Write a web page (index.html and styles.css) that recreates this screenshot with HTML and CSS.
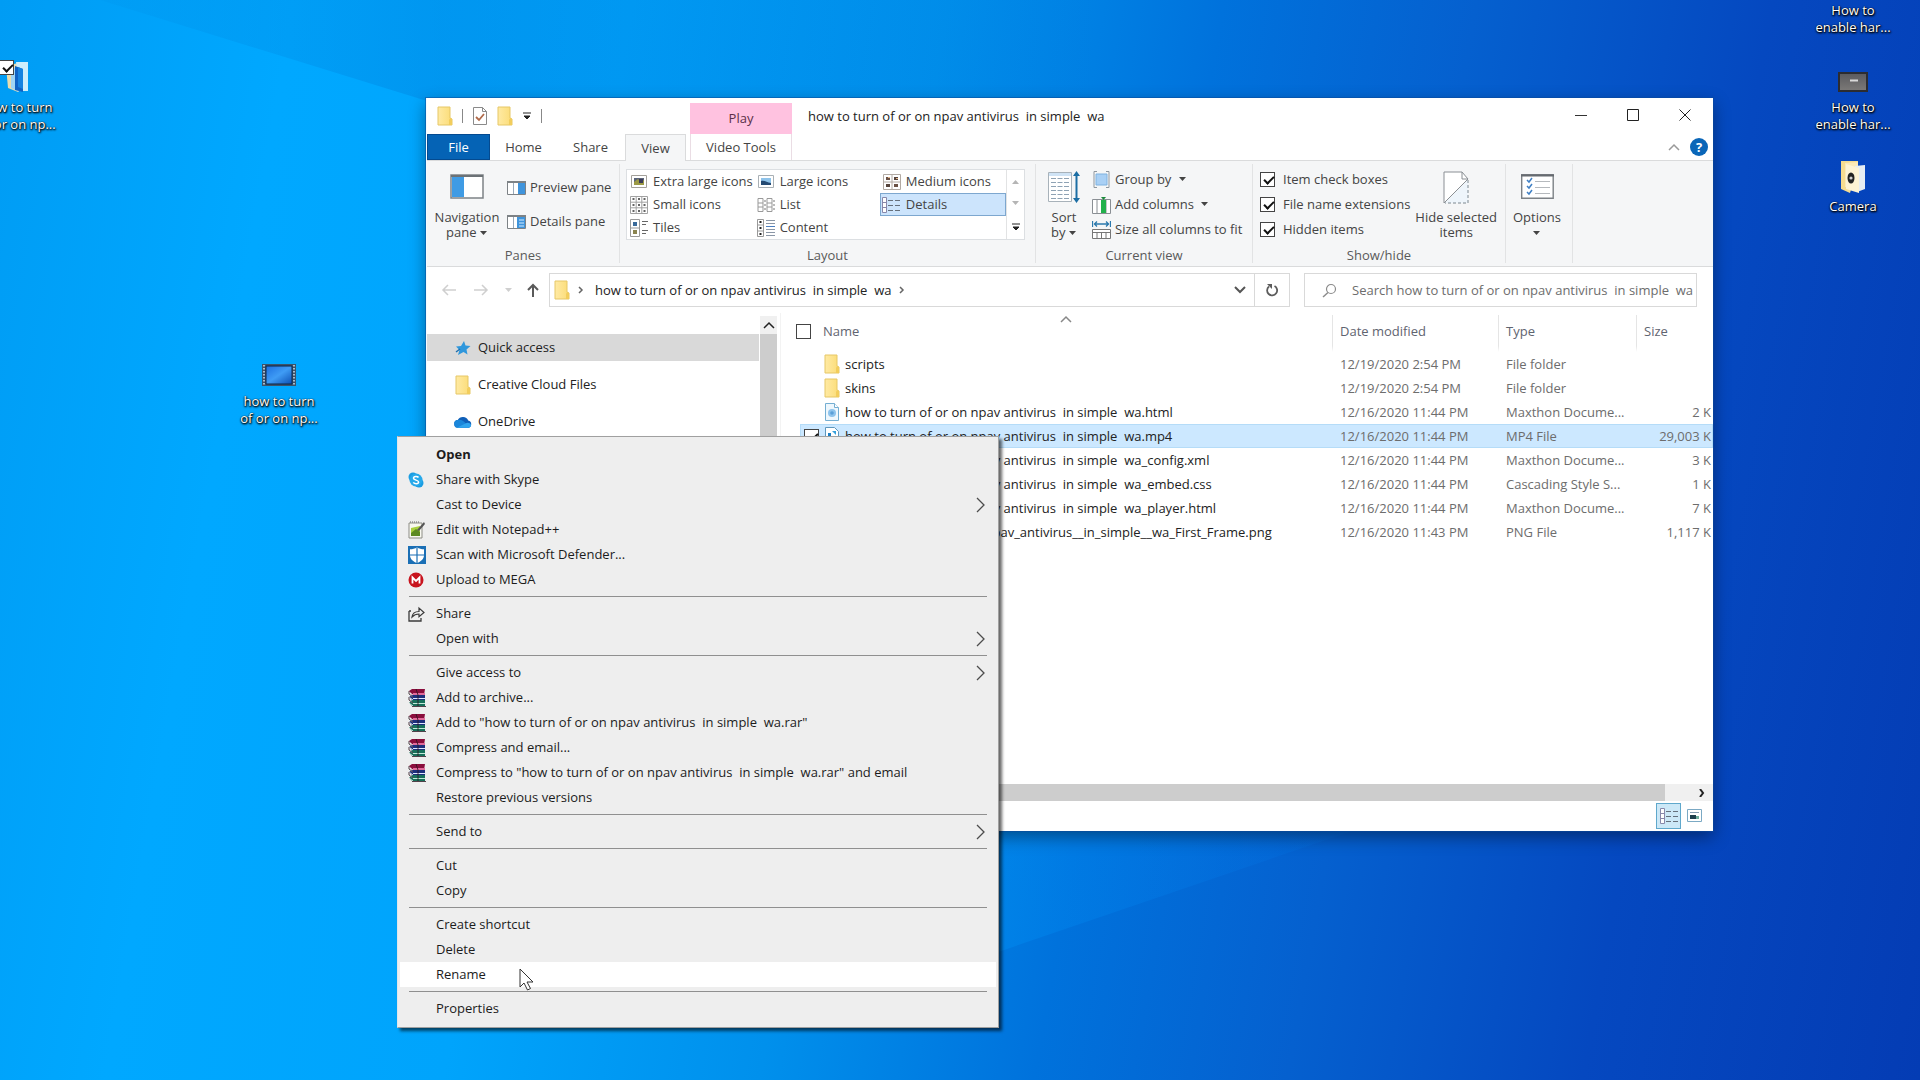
FILE: index.html
```html
<!DOCTYPE html>
<html lang="en">
<head>
<meta charset="utf-8">
<title>how to turn of or on npav antivirus  in simple  wa</title>
<link rel="stylesheet" href="styles.css">
</head>
<body>
<svg class="defs" aria-hidden="true">
  <defs>
    <linearGradient id="folder-fill" x1="0" y1="0" x2="1" y2="0"><stop offset="0" stop-color="#ffeaa4"/><stop offset="1" stop-color="#fbdc76"/></linearGradient>
    <linearGradient id="screen-fill" x1="0" y1="0" x2="1" y2="1"><stop offset="0" stop-color="#1c6fe0"/><stop offset=".5" stop-color="#3f9cf5"/><stop offset="1" stop-color="#0b4fb4"/></linearGradient>
    <linearGradient id="metal-fill" x1="0" y1="0" x2="0" y2="1"><stop offset="0" stop-color="#5a5a5e"/><stop offset="1" stop-color="#7c7a78"/></linearGradient>
    <symbol id="i-folder" viewBox="0 0 16 20"><path d="M1 1h12v11l2 1v6H1z" fill="url(#folder-fill)" stroke="#e6c766"/><path d="M13 12l2 1v6h-3v-5z" fill="#f2cd5c"/></symbol>
    <symbol id="i-props" viewBox="0 0 16 20"><path d="M1.500 1.500h9l4 4v13h-13z" fill="#fff" stroke="#8a8a8a"/><path d="M10.500 1.500v4h4" fill="none" stroke="#8a8a8a"/><path d="M4 11l3 3 5-6" fill="none" stroke="#b06a4a" stroke-width="1.800"/></symbol>
    <symbol id="i-more" viewBox="0 0 10 8"><path d="M1 1h8M2 4h6L5 7z" stroke="#222" fill="#222"/></symbol>
    <symbol id="i-down" viewBox="0 0 8 5"><path d="M0 0h7L3.500 4z" fill="currentColor"/></symbol>
    <symbol id="i-up" viewBox="0 0 8 5"><path d="M0 5h7L3.500 1z" fill="currentColor"/></symbol>
    <symbol id="i-navpane" viewBox="0 0 34 25"><path d="M1 1h32v23H1z" fill="#fff" stroke="#7d8286" stroke-width="1.500"/><path d="M2 3h12v20H2z" fill="#3f9be4"/><path d="M1 2h32" stroke="#6c7276" stroke-width="2"/></symbol>
    <symbol id="i-preview" viewBox="0 0 19 14"><path d="M.5.5h18v13H.5z" fill="#fff" stroke="#7d8286"/><path d="M0 1h19" stroke="#7d8286" stroke-width="2"/><path d="M11 2h7v11h-7z" fill="#3f94dc"/><path d="M6.500 2v11" stroke="#9ab"/></symbol>
    <symbol id="i-detailspane" viewBox="0 0 19 14"><path d="M.5.5h18v13H.5z" fill="#fff" stroke="#7d8286"/><path d="M0 1h19" stroke="#7d8286" stroke-width="2"/><path d="M10 2h8v11h-8z" fill="#3f94dc"/><path d="M12 5h5M12 8h5M12 11h5" stroke="#d5ecff"/><path d="M6.500 2v11" stroke="#9ab"/></symbol>
    <symbol id="i-xl" viewBox="0 0 18 18"><path d="M1.500 2.500h15v12h-15z" fill="#fff" stroke="#a3a09a"/><path d="M4 5h10v7H4z" fill="#5b6478"/><path d="M4 9l4-3 3 3 3-2v5H4z" fill="#9c9a45"/><path d="M9 6h4v4H9z" fill="#3b3a58"/></symbol>
    <symbol id="i-large" viewBox="0 0 18 18"><path d="M1.500 2.500h15v12h-15z" fill="#fff" stroke="#a9b0b5"/><path d="M4 5h10v7H4z" fill="#8ec3ea"/><path d="M4 8c4-1 6 2 10 2v2H4z" fill="#244a73"/></symbol>
    <symbol id="i-medium" viewBox="0 0 18 18"><path d="M.5 1.500h17v15H.5zM9 2v14M1 9h16" fill="#fff" stroke="#b2aaa3"/><path d="M3 4h4v3H3zM11 11h4v3h-4z" fill="#6a5145"/><path d="M11 4h4v3h-4zM3 11h4v3H3z" fill="#56443c"/><path d="M5 4h2v1H5zM13 5h2v1h-2z" fill="#e8b98d"/></symbol>
    <symbol id="i-small" viewBox="0 0 18 18"><path d="M.5.5h17v17H.5zM6.200 0v18M11.800 0v18M0 6.200h18M0 11.800h18" fill="#fff" stroke="#a2a2a2"/><path d="M2.500 3h2M8 3h2M13.500 3h2M2.500 9h2M8 9h2M13.500 9h2M2.500 15h2M8 15h2M13.500 15h2" stroke="#333" stroke-width="1.600"/></symbol>
    <symbol id="i-list" viewBox="0 0 18 18"><path d="M1 2.500h5v13H1zM10 2.500h5v13h-5zM1 7h5M1 11h5M10 7h5M10 11h5" fill="#fff" stroke="#999"/><path d="M7 5h2M7 9h2M7 13h2M16 5h2M16 9h2M16 13h2" stroke="#777"/></symbol>
    <symbol id="i-details" viewBox="0 0 20 18"><path d="M1.500 1.500h4v15h-4zM2 6.500h3M2 11.500h3" fill="#fff" stroke="#88a"/><path d="M7 4.500h5M14 4.500h5M7 9.500h5M14 9.500h5M7 14.500h5M14 14.500h5" stroke="#66707c"/></symbol>
    <symbol id="i-thumbs" viewBox="0 0 18 18"><path d="M1.500 2.500h14v12h-14z" fill="#fff" stroke="#7ba9c4"/><path d="M4 5.500h9" stroke="#88a0b4"/><path d="M4 8h6v4H4z" fill="#1d3f4c"/><path d="M10 9h3v3h-3z" fill="#6fae9c"/></symbol>
    <symbol id="i-tiles" viewBox="0 0 18 18"><path d="M.5.5h9v17h-9zM1 9h8" fill="#fff" stroke="#999"/><path d="M3 3h4v4H3z" fill="#3a6a9a"/><path d="M3 11h4v4H3z" fill="#8a8450"/><path d="M12 2.500h6M12 5.500h4M12 11.500h6M12 14.500h4" stroke="#666"/></symbol>
    <symbol id="i-content" viewBox="0 0 18 18"><path d="M.5.500h6v17h-6zM1 6h5M1 12h5" fill="#fff" stroke="#999"/><path d="M2.500 3h2M2.500 9h2M2.500 15h2" stroke="#222" stroke-width="2"/><path d="M9 1.500h9M9 4.500h9M9 10.500h9M9 13.500h9M9 16.500h9" stroke="#8a96a6"/><path d="M9 7.500h9" stroke="#4b7ec0"/></symbol>
    <symbol id="i-sort" viewBox="0 0 32 32"><path d="M.5 1.500h23v29H.5z" fill="#fff" stroke="#a8b2ba"/><path d="M1 2h22v3H1z" fill="#cfe3f5"/><path d="M3 7.500h18M3 11.500h18M3 15.500h18M3 19.500h18M3 23.500h18M3 27.500h18" stroke="#8ea2b4" stroke-dasharray="5 1.500"/><path d="M28.500 4v24" stroke="#1c6ea4" stroke-width="2"/><path d="M28.500 0l3.500 5h-7zM28.500 32l3.500-5h-7z" fill="#1c6ea4"/></symbol>
    <symbol id="i-group" viewBox="0 0 19 17"><path d="M4 3h11v11H4z" fill="#a9d0f5" stroke="#7fb2e0"/><path d="M5 .5H2v16h3M14 .5h3v16h-3" fill="none" stroke="#8f979e"/></symbol>
    <symbol id="i-addcol" viewBox="0 0 19 18"><path d="M.5 3.500h18v14H.5zM5 4v13M14 4v13" fill="#fff" stroke="#8a8f94"/><path d="M9 4h5v13H9z" fill="#22b14c"/><path d="M11.500 4L9 1h5z" fill="#1a8a3a"/></symbol>
    <symbol id="i-fit" viewBox="0 0 19 20"><path d="M.5 1v6M18.500 1v6M2 4h15M5 1.500L2.500 4 5 6.500M14 1.500L16.500 4 14 6.500" fill="none" stroke="#2b79ad" stroke-width="1.300"/><path d="M.5 9.500h18v9H.5zM1 12.500h17M5 12v7M9.500 12v7M14 12v7" fill="#fff" stroke="#777"/></symbol>
    <symbol id="i-hide" viewBox="0 0 26 34"><path d="M1 32V1h18l6 7z" fill="#fff"/><path d="M25 9v23H2" fill="#eef5fb" stroke="#7d8790" stroke-dasharray="3 2"/><path d="M1 32V1h18l6 7L1 32" fill="none" stroke="#8a8f94"/><path d="M19 1v7h6" fill="none" stroke="#8a8f94"/></symbol>
    <symbol id="i-options" viewBox="0 0 33 25"><path d="M.7.700h31.500v23.500H.7z" fill="#fff" stroke="#7c8186" stroke-width="1.400"/><path d="M0 1.500h33" stroke="#666b70" stroke-width="2"/><path d="M6 6l2 2 3-4M6 12l2 2 3-4M6 18l2 2 3-4" fill="none" stroke="#3f7fc4" stroke-width="1.500"/><path d="M14 7.500h15M14 13.500h15M14 19.500h15" stroke="#b5b9bd"/></symbol>
    <symbol id="i-back" viewBox="0 0 16 14"><path d="M15 7H2M7 2L2 7l5 5" fill="none" stroke="currentColor" stroke-width="1.500"/></symbol>
    <symbol id="i-fwd" viewBox="0 0 16 14"><path d="M1 7h13M9 2l5 5-5 5" fill="none" stroke="currentColor" stroke-width="1.500"/></symbol>
    <symbol id="i-parent" viewBox="0 0 14 15"><path d="M7 14V2M2 7l5-5 5 5" fill="none" stroke="#5a5a5a" stroke-width="2"/></symbol>
    <symbol id="i-chev" viewBox="0 0 6 8"><path d="M1 1l3 3-3 3" fill="none" stroke="#666" stroke-width="1.500"/></symbol>
    <symbol id="i-chevdown" viewBox="0 0 12 8"><path d="M1 1l5 5 5-5" fill="none" stroke="#555" stroke-width="2"/></symbol>
    <symbol id="i-chevup" viewBox="0 0 12 8"><path d="M1 7l5-5 5 5" fill="none" stroke="currentColor" stroke-width="1.500"/></symbol>
    <symbol id="i-refresh" viewBox="0 0 14 14"><path d="M9.500 3A5 5 0 1 1 4 3.500" fill="none" stroke="#5c5c5c" stroke-width="1.800"/><path d="M2 1h5v5z" fill="#5c5c5c"/></symbol>
    <symbol id="i-search" viewBox="0 0 15 15"><circle cx="9" cy="6" r="4.500" fill="none" stroke="#8b8b8b" stroke-width="1.200"/><path d="M6 9.500L1 14" stroke="#8b8b8b" stroke-width="1.500"/></symbol>
    <symbol id="i-star" viewBox="0 0 16 16"><path d="M9 1l1.500 4.500L15.500 6l-4 3.500 1 5-4-2.500L3 15l1.500-5L1 6.500l5-.5z" fill="#2f97dc"/><path d="M1 12l4-3" stroke="#1c70b0" stroke-width="1.500"/></symbol>
    <symbol id="i-cloud" viewBox="0 0 19 12"><path d="M4.500 12a4 4 0 0 1-.5-8 6 6 0 0 1 11 .5A3.800 3.800 0 0 1 15 12z" fill="#0f5fb8"/><path d="M4 4c3-1 6 1 8 3l4 5H4.500A4 4 0 0 1 4 4z" fill="#1a86da"/><path d="M3 12l9-4.500c3-1.500 6 0 6 2 0 1.500-1.500 2.500-3 2.500z" fill="#2fa4ee"/></symbol>
    <symbol id="i-html" viewBox="0 0 16 20"><path d="M1.500 1.500h9l4 4v13h-13z" fill="#eef7fd" stroke="#74aed2"/><circle cx="8" cy="11" r="4" fill="#8dc3ec"/><circle cx="8" cy="11" r="1.800" fill="#5a9fd8"/><path d="M10.500 1.500v4h4" fill="#fff" stroke="#74aed2"/></symbol>
    <symbol id="i-mp4" viewBox="0 0 16 20"><path d="M1.500 1.500h9l4 4v13h-13z" fill="#fff" stroke="#5e97bd"/><path d="M4 7h3v3h4v5H4z" fill="#1b7fc4"/><path d="M8 5h4v4z" fill="#35a0dc"/></symbol>
    <symbol id="i-skype" viewBox="0 0 16 16"><circle cx="5" cy="5" r="4.500" fill="#1b9de2"/><circle cx="11" cy="11" r="4.500" fill="#1b9de2"/><circle cx="8" cy="8" r="6.500" fill="#27a9ea"/><path d="M10.500 5.500C9.500 4 5.500 4 5.500 6.200S10.600 7.800 10.600 10 6.500 12.200 5.300 10.300" fill="none" stroke="#fff" stroke-width="1.500"/></symbol>
    <symbol id="i-notepad" viewBox="0 0 18 18"><path d="M1 2h13v15H1z" fill="#f8f8f0" stroke="#8d8d86"/><path d="M3 7l9-2v9H3z" fill="#a8cf3e"/><path d="M3 12l5-4 4 3v4H3z" fill="#5d8a22"/><path d="M9 9l7-8 1 2-6 7z" fill="#555"/><path d="M2 1h10" stroke="#666" stroke-dasharray="1 1"/></symbol>
    <symbol id="i-defender" viewBox="0 0 18 18"><path d="M0 0h18v18H0z" fill="#1a6fb5"/><path d="M9 1.500c2 1.200 4.500 1.800 7 1.800V9c0 4-3 6.500-7 8-4-1.500-7-4-7-8V3.300c2.500 0 5-.6 7-1.800z" fill="#fff"/><path d="M9 2v15M2 9h14" stroke="#1a6fb5" stroke-width="1.200"/></symbol>
    <symbol id="i-mega" viewBox="0 0 16 16"><circle cx="8" cy="8" r="7.500" fill="#c8141e"/><path d="M4.500 11.500v-6L8 9l3.500-3.500v6" fill="none" stroke="#fff" stroke-width="1.800"/></symbol>
    <symbol id="i-share" viewBox="0 0 17 16"><path d="M1 5v10h12v-3M1 5h2" fill="none" stroke="#3b3b3b" stroke-width="1.300"/><path d="M4 11c.5-4 3-5.500 7-5.500V2l5 4.500-5 4.300V8C8 8 6 8.800 4 11z" fill="#f2f2f2" stroke="#3b3b3b" stroke-width="1.200"/></symbol>
    <symbol id="i-rar" viewBox="0 0 18 18"><path d="M1 2l3-2h13l-1 6H4z" fill="#8a0d3c"/><path d="M5 4h12v2H5z" fill="#e06a9a"/><path d="M1 8l3-2h13v5H4z" fill="#1c2f7c"/><path d="M5 9h12v1H5z" fill="#dfe6ff"/><path d="M1 14l3-3h13v6H4z" fill="#17705a"/><path d="M5 14h12v1H5z" fill="#bfe8d8"/><path d="M1 3l4 3M1 8l4 3M1 14l4 3M1 5l4 3M1 11l4 3" stroke="#fff" stroke-width=".8"/><path d="M1 2v3l4 3M1 8v3l4 3M4 17.500h14M8 0l2 6v11" fill="none" stroke="#2a1420" stroke-width=".8"/></symbol>
    <symbol id="i-sub" viewBox="0 0 9 16"><path d="M1 1l7 7-7 7" fill="none" stroke="#4c4c4c" stroke-width="1.300"/></symbol>
    <symbol id="i-film" viewBox="0 0 34 22"><path d="M0 0h34v22H0z" fill="#3c536b"/><path d="M2 1v20M32 1v20" stroke="#a9bccd" stroke-width="2" stroke-dasharray="1.500 1.500"/><path d="M4 2h26v18H4z" fill="url(#screen-fill)" stroke="#0c2748"/></symbol>
    <symbol id="i-device" viewBox="0 0 30 20"><path d="M1 1h28v18H1z" fill="url(#metal-fill)" stroke="#2c2c30" stroke-width="2"/><path d="M12 8.500h8" stroke="#d9d9d9" stroke-width="2"/></symbol>
    <symbol id="i-camera" viewBox="0 0 26 34"><path d="M1 1h17v5l-8 27L1 29z" fill="#f6dc90"/><path d="M5 3l13-1v25H5z" fill="#fbe9b8"/><path d="M15 6l10-1v24l-8 3z" fill="#e6edf3"/><path d="M6 4l13 4v25L6 29z" fill="#fdf3d4"/><ellipse cx="11" cy="18" rx="3.500" ry="5.500" fill="#232323"/><circle cx="11" cy="18" r="1.600" fill="#cfcfcf"/></symbol>
    <symbol id="i-books" viewBox="0 0 28 34"><path d="M3 6l12-3v29L5 28z" fill="#e9dcae"/><path d="M13 2h12v29h-8z" fill="#cdeefc"/><path d="M8 7l8 2v23l-8-4z" fill="#9fd4f5"/><path d="M12 6l8 3v23l-8-2z" fill="#0f62c4"/><path d="M15 7l5 2v20l-5-2z" fill="#1583e0"/></symbol>
  </defs>
</svg>

<main class="desktop">
  <svg class="wallpaper" viewBox="0 0 1920 1080" preserveAspectRatio="none" aria-hidden="true">
    <defs>
      <linearGradient id="beam-low" gradientUnits="userSpaceOnUse" x1="960" y1="0" x2="1500" y2="0"><stop offset="0" stop-color="#0098f8" stop-opacity=".35"/><stop offset="1" stop-color="#0070f0" stop-opacity="0"/></linearGradient>
      <linearGradient id="beam-top" gradientUnits="userSpaceOnUse" x1="0" y1="0" x2="1100" y2="0"><stop offset="0" stop-color="#0070c8" stop-opacity="0"/><stop offset=".4" stop-color="#0068c8" stop-opacity=".25"/><stop offset="1" stop-color="#0050b8" stop-opacity="0"/></linearGradient>
    </defs>
    <path d="M100 0L440 105H1300V0z" fill="url(#beam-top)"/>
    <path d="M940 760H1560L960 965z" fill="url(#beam-low)"/>
  </svg>

  <button class="shortcut shortcut-books"><svg width="28" height="34"><use href="#i-books"/></svg><span>how to turn<br>of or on np...</span><input type="checkbox" class="tick" checked aria-label="Select folder"></button>
  <button class="shortcut shortcut-film"><svg width="34" height="22"><use href="#i-film"/></svg><span>how to turn<br>of or on np...</span></button>
  <div class="shortcut-column">
    <button class="shortcut"><span>How to<br>enable har...</span></button>
    <button class="shortcut"><svg width="30" height="20"><use href="#i-device"/></svg><span>How to<br>enable har...</span></button>
    <button class="shortcut"><svg width="26" height="34"><use href="#i-camera"/></svg><span>Camera</span></button>
  </div>

  <section class="window">
    <header class="titlebar">
      <div class="quickbar">
        <svg width="16" height="20"><use href="#i-folder"/></svg><i class="bar"></i>
        <button aria-label="Properties"><svg width="16" height="20"><use href="#i-props"/></svg></button>
        <button aria-label="New folder"><svg width="16" height="20"><use href="#i-folder"/></svg></button>
        <button aria-label="Customize toolbar"><svg width="10" height="8"><use href="#i-more"/></svg></button><i class="bar"></i>
      </div>
      <div class="context-tab">Play</div>
      <h1>how to turn of or on npav antivirus  in simple  wa</h1>
      <div class="caption">
        <button aria-label="Minimize"><svg width="12" height="12"><path d="M0 6.500h12" stroke="#333"/></svg></button>
        <button aria-label="Maximize"><svg width="12" height="12"><path d="M.5.500h11v11H.5z" fill="none" stroke="#222"/></svg></button>
        <button aria-label="Close"><svg width="12" height="12"><path d="M.5.500l11 11M11.500.500l-11 11" stroke="#222"/></svg></button>
      </div>
    </header>

    <nav class="tabs">
      <button class="tab file">File</button>
      <button class="tab">Home</button>
      <button class="tab">Share</button>
      <button class="tab current">View</button>
      <button class="tab video">Video Tools</button>
      <div class="tab-tools">
        <button class="fold" aria-label="Collapse ribbon"><svg width="12" height="8"><use href="#i-chevup"/></svg></button>
        <button class="help">?</button>
      </div>
    </nav>

    <div class="ribbon">
      <section class="group panes">
        <div class="group-body">
          <button class="big"><svg width="34" height="25"><use href="#i-navpane"/></svg><span>Navigation<br>pane <svg width="8" height="5"><use href="#i-down"/></svg></span></button>
          <div class="stack pane-stack">
            <button><svg width="19" height="14"><use href="#i-preview"/></svg>Preview pane</button>
            <button><svg width="19" height="14"><use href="#i-detailspane"/></svg>Details pane</button>
          </div>
        </div>
        <h2>Panes</h2>
      </section>
      <section class="group layout">
        <div class="group-body">
          <div class="gallery">
            <div class="gallery-grid">
              <button><svg width="18" height="18"><use href="#i-xl"/></svg>Extra large icons</button>
              <button><svg width="18" height="18"><use href="#i-large"/></svg>Large icons</button>
              <button><svg width="18" height="18"><use href="#i-medium"/></svg>Medium icons</button>
              <button><svg width="18" height="18"><use href="#i-small"/></svg>Small icons</button>
              <button><svg width="18" height="18"><use href="#i-list"/></svg>List</button>
              <button class="chosen"><svg width="20" height="18"><use href="#i-details"/></svg>Details</button>
              <button><svg width="18" height="18"><use href="#i-tiles"/></svg>Tiles</button>
              <button><svg width="18" height="18"><use href="#i-content"/></svg>Content</button>
            </div>
            <div class="gallery-scroll">
              <button class="dim" aria-label="Scroll up"><svg width="8" height="5"><use href="#i-up"/></svg></button>
              <button class="dim" aria-label="Scroll down"><svg width="8" height="5"><use href="#i-down"/></svg></button>
              <button aria-label="More layouts"><svg width="10" height="8"><use href="#i-more"/></svg></button>
            </div>
          </div>
        </div>
        <h2>Layout</h2>
      </section>
      <section class="group view">
        <div class="group-body">
          <button class="big"><svg width="32" height="32"><use href="#i-sort"/></svg><span>Sort<br>by <svg width="8" height="5"><use href="#i-down"/></svg></span></button>
          <div class="stack">
            <button><svg width="19" height="17"><use href="#i-group"/></svg>Group by <svg width="8" height="5"><use href="#i-down"/></svg></button>
            <button><svg width="19" height="18"><use href="#i-addcol"/></svg>Add columns <svg width="8" height="5"><use href="#i-down"/></svg></button>
            <button><svg width="19" height="20"><use href="#i-fit"/></svg>Size all columns to fit</button>
          </div>
        </div>
        <h2>Current view</h2>
      </section>
      <section class="group show">
        <div class="group-body">
          <div class="stack checks">
            <label><input type="checkbox" class="tick" checked>Item check boxes</label>
            <label><input type="checkbox" class="tick" checked>File name extensions</label>
            <label><input type="checkbox" class="tick" checked>Hidden items</label>
          </div>
          <button class="big"><svg width="26" height="34"><use href="#i-hide"/></svg><span>Hide selected<br>items</span></button>
        </div>
        <h2>Show/hide</h2>
      </section>
      <section class="group opts">
        <div class="group-body">
          <button class="big"><svg width="33" height="25"><use href="#i-options"/></svg><span>Options<br><svg width="8" height="5"><use href="#i-down"/></svg></span></button>
        </div>
      </section>
    </div>

    <div class="locate">
      <div class="history">
        <button class="dim" aria-label="Back"><svg width="16" height="14"><use href="#i-back"/></svg></button>
        <button class="dim" aria-label="Forward"><svg width="16" height="14"><use href="#i-fwd"/></svg></button>
        <button class="dim" aria-label="Recent"><svg width="8" height="5"><use href="#i-down"/></svg></button>
        <button aria-label="Up"><svg width="14" height="15"><use href="#i-parent"/></svg></button>
      </div>
      <div class="address">
        <svg width="16" height="20"><use href="#i-folder"/></svg>
        <svg width="6" height="8"><use href="#i-chev"/></svg>
        <a href="#here">how to turn of or on npav antivirus  in simple  wa</a>
        <svg width="6" height="8"><use href="#i-chev"/></svg>
        <button class="drop" aria-label="Previous locations"><svg width="12" height="8"><use href="#i-chevdown"/></svg></button>
        <button class="refresh" aria-label="Refresh"><svg width="14" height="14"><use href="#i-refresh"/></svg></button>
      </div>
      <label class="search"><svg width="15" height="15"><use href="#i-search"/></svg><input type="text" aria-label="Search" placeholder="Search how to turn of or on npav antivirus  in simple  wa"></label>
    </div>

    <div class="content">
      <aside class="places">
        <ul>
          <li class="here"><a href="#quick"><svg width="18" height="16"><use href="#i-star"/></svg>Quick access</a></li>
          <li><a href="#ccf"><svg width="18" height="20"><use href="#i-folder"/></svg>Creative Cloud Files</a></li>
          <li><a href="#onedrive"><svg width="18" height="12"><use href="#i-cloud"/></svg>OneDrive</a></li>
        </ul>
        <div class="vscroll"><button aria-label="Scroll up"><svg width="12" height="8"><use href="#i-chevup"/></svg></button><i></i></div>
      </aside>
      <div class="files">
        <table>
          <colgroup><col><col class="c-date"><col class="c-type"><col class="c-size"></colgroup>
          <thead>
            <tr><th><span class="head-name"><input type="checkbox" class="tick" aria-label="Select all">Name</span><svg class="sorted" width="12" height="8"><use href="#i-chevup"/></svg></th><th>Date modified</th><th>Type</th><th>Size</th></tr>
          </thead>
          <tbody>
            <tr><td><span class="name"><svg width="16" height="20"><use href="#i-folder"/></svg>scripts</span></td><td>12/19/2020 2:54 PM</td><td>File folder</td><td></td></tr>
            <tr><td><span class="name"><svg width="16" height="20"><use href="#i-folder"/></svg>skins</span></td><td>12/19/2020 2:54 PM</td><td>File folder</td><td></td></tr>
            <tr><td><span class="name"><svg width="16" height="20"><use href="#i-html"/></svg>how to turn of or on npav antivirus  in simple  wa.html</span></td><td>12/16/2020 11:44 PM</td><td>Maxthon Docume...</td><td>2 K</td></tr>
            <tr class="picked"><td><span class="name"><input type="checkbox" class="tick" checked aria-label="Select file"><svg width="16" height="20"><use href="#i-mp4"/></svg>how to turn of or on npav antivirus  in simple  wa.mp4</span></td><td>12/16/2020 11:44 PM</td><td>MP4 File</td><td>29,003 K</td></tr>
            <tr><td><span class="name"><svg width="16" height="20"><use href="#i-html"/></svg>how to turn of or on npav antivirus  in simple  wa_config.xml</span></td><td>12/16/2020 11:44 PM</td><td>Maxthon Docume...</td><td>3 K</td></tr>
            <tr><td><span class="name"><svg width="16" height="20"><use href="#i-html"/></svg>how to turn of or on npav antivirus  in simple  wa_embed.css</span></td><td>12/16/2020 11:44 PM</td><td>Cascading Style S...</td><td>1 K</td></tr>
            <tr><td><span class="name"><svg width="16" height="20"><use href="#i-html"/></svg>how to turn of or on npav antivirus  in simple  wa_player.html</span></td><td>12/16/2020 11:44 PM</td><td>Maxthon Docume...</td><td>7 K</td></tr>
            <tr><td><span class="name"><svg width="16" height="20"><use href="#i-html"/></svg>how_to_turn_of_or_on_npav_antivirus__in_simple__wa_First_Frame.png</span></td><td>12/16/2020 11:43 PM</td><td>PNG File</td><td>1,117 K</td></tr>
          </tbody>
        </table>
        <div class="hscroll"><i></i><button aria-label="Scroll right"><svg width="6" height="8"><path d="M1 0l3 4-3 4" fill="none" stroke="#222" stroke-width="2"/></svg></button></div>
      </div>
    </div>
    <footer class="status">
      <button class="mode on" aria-label="Details view"><svg width="20" height="18"><use href="#i-details"/></svg></button>
      <button class="mode" aria-label="Thumbnail view"><svg width="18" height="18"><use href="#i-thumbs"/></svg></button>
    </footer>
  </section>

  <div class="menu" role="menu">
    <button role="menuitem" class="strong"><i></i>Open</button>
    <button role="menuitem"><i><svg width="16" height="16"><use href="#i-skype"/></svg></i>Share with Skype</button>
    <button role="menuitem"><i></i>Cast to Device<svg class="sub" width="9" height="16"><use href="#i-sub"/></svg></button>
    <button role="menuitem"><i><svg width="18" height="18"><use href="#i-notepad"/></svg></i>Edit with Notepad++</button>
    <button role="menuitem"><i><svg width="18" height="18"><use href="#i-defender"/></svg></i>Scan with Microsoft Defender...</button>
    <button role="menuitem"><i><svg width="16" height="16"><use href="#i-mega"/></svg></i>Upload to MEGA</button>
    <hr>
    <button role="menuitem"><i><svg width="17" height="16"><use href="#i-share"/></svg></i>Share</button>
    <button role="menuitem"><i></i>Open with<svg class="sub" width="9" height="16"><use href="#i-sub"/></svg></button>
    <hr>
    <button role="menuitem"><i></i>Give access to<svg class="sub" width="9" height="16"><use href="#i-sub"/></svg></button>
    <button role="menuitem"><i><svg width="18" height="18"><use href="#i-rar"/></svg></i>Add to archive...</button>
    <button role="menuitem"><i><svg width="18" height="18"><use href="#i-rar"/></svg></i>Add to "how to turn of or on npav antivirus  in simple  wa.rar"</button>
    <button role="menuitem"><i><svg width="18" height="18"><use href="#i-rar"/></svg></i>Compress and email...</button>
    <button role="menuitem"><i><svg width="18" height="18"><use href="#i-rar"/></svg></i>Compress to "how to turn of or on npav antivirus  in simple  wa.rar" and email</button>
    <button role="menuitem"><i></i>Restore previous versions</button>
    <hr>
    <button role="menuitem"><i></i>Send to<svg class="sub" width="9" height="16"><use href="#i-sub"/></svg></button>
    <hr>
    <button role="menuitem"><i></i>Cut</button>
    <button role="menuitem"><i></i>Copy</button>
    <hr>
    <button role="menuitem"><i></i>Create shortcut</button>
    <button role="menuitem"><i></i>Delete</button>
    <button role="menuitem" class="hot"><i></i>Rename</button>
    <hr>
    <button role="menuitem"><i></i>Properties</button>
  </div>

  <svg class="pointer" width="16" height="24" viewBox="0 0 16 24" aria-hidden="true"><path d="M1 1v18l4-4 3.500 7 3-1.500L8 14h6z" fill="#fff" stroke="#333"/></svg>
</main>
</body>
</html>
```
FILE: styles.css
```css
* { box-sizing: border-box; }
html, body { height: 100%; }
body {
  margin: 0;
  overflow: hidden;
  font-family: "Open Sans", "Noto Sans", sans-serif;
  font-size: 13px;
  line-height: 17px;
  color: #222;
}
button {
  margin: 0; padding: 0; border: 0; background: none;
  font: inherit; color: inherit; white-space: pre;
}
svg { display: block; flex: none; }
a { color: inherit; text-decoration: none; }
h1, h2 { margin: 0; font-size: inherit; font-weight: 400; white-space: pre; }
.defs { position: absolute; width: 0; height: 0; }
.dim { color: #cfcfcf; }

.tick {
  appearance: none;
  width: 15px; height: 15px; margin: 0; flex: none;
  border: 1px solid #444; background: #fff;
}
.tick:checked::after {
  content: ""; display: block;
  width: 4px; height: 8px; margin: 1px 0 0 5px;
  border: solid #111; border-width: 0 2px 2px 0;
  transform: rotate(45deg);
}

/* Desktop */
.desktop {
  position: relative; height: 100%; overflow: hidden;
  background: linear-gradient(100deg, #009cf4 0%, #00a8ff 14%, #00a4fc 30%, #0090ec 45%, #0072dc 58%, #0560cf 70%, #0548c0 84%, #043cb4 100%);
}
.wallpaper { position: absolute; inset: 0; width: 100%; height: 100%; }
.shortcut {
  display: flex; flex-direction: column; align-items: center; gap: 7px;
  width: 100px; color: #fff; text-shadow: 0 1px 2px #000, 1px 1px 2px #000, 0 0 1px #000;
}
.shortcut-books { position: absolute; left: -33px; top: 60px; gap: 5px; }
.shortcut-books .tick { position: absolute; left: 32px; top: 0; }
.shortcut-film { position: absolute; left: 229px; top: 364px; }
.shortcut-column {
  position: absolute; right: 17px; top: 2px;
  display: flex; flex-direction: column; gap: 27px;
}
.shortcut-column .shortcut:nth-child(2) { margin-top: 9px; }
.shortcut-column .shortcut:nth-child(3) { gap: 4px; }

/* Explorer window */
.window {
  position: absolute; left: 426px; right: 207px; top: 98px; bottom: 249px;
  display: flex; flex-direction: column;
  background: #fff; border-left: 1px solid #f4fbff;
  box-shadow: 0 0 0 1px #0a4a9c80, 0 6px 16px #0006;
}
.titlebar { display: flex; height: 36px; align-items: center; }
.quickbar { display: flex; width: 263px; align-items: center; gap: 9px; padding-left: 10px; }
.bar { width: 1px; height: 14px; background: #888; }
.context-tab {
  width: 102px; align-self: stretch; margin-top: 5px;
  display: flex; align-items: center; justify-content: center;
  background: #ffc2e0; color: #5a3048;
}
.titlebar h1 { flex: 1; padding-left: 16px; color: #222; }
.caption { display: flex; align-self: stretch; margin: 0 2px 2px 0; }
.caption button { width: 52px; display: grid; place-items: center; }

.tabs { display: flex; height: 27px; align-items: stretch; border-bottom: 1px solid #dadbdc; }
.tab { width: 67px; color: #444; }
.file { width: 63px; background: #0563b5; border: 1px solid #044a90; color: #fff; }
.tab.current { width: 61px; margin: 0 4px -1px 1px; background: #f5f6f7; border: 1px solid #dadbdc; border-bottom: 0; }
.video { width: 102px; border: solid #eadde4; border-width: 0 1px; }
.tab-tools { margin-left: auto; display: flex; align-items: center; gap: 10px; padding-right: 5px; }
.fold { color: #999; }
.help {
  width: 18px; height: 18px; border-radius: 50%;
  background: #0a66b8; color: #fff; font-weight: 700; line-height: 18px;
}

.ribbon { display: flex; height: 106px; background: #f5f6f7; border-bottom: 1px solid #dadbdc; }
.group { display: flex; flex-direction: column; margin: 3px 0; border-right: 1px solid #e2e3e4; }
.group-body { display: flex; flex: 1; padding-top: 3px; }
.group h2 { text-align: center; color: #5a5a5a; line-height: 16px; }
.ribbon button, .ribbon label { line-height: 15px; color: #444; }
.big { display: flex; flex-direction: column; align-items: center; justify-content: space-between; height: 73px; }
.big svg { margin-top: 7px; }
.big span svg { display: inline-block; vertical-align: middle; margin: 0; }
.stack { display: flex; flex-direction: column; }
.stack button, .stack label { display: flex; align-items: center; gap: 4px; height: 25px; }
.panes { width: 193px; }
.panes .big { width: 80px; }
.pane-stack { gap: 9px; padding-top: 8px; }
.layout { width: 416px; }
.gallery { flex: 1; display: flex; margin: 2px 10px 0 6px; height: 71px; border: 1px solid #dcdfe2; background: #fff; }
.gallery-grid { flex: 1; display: grid; grid-template-columns: repeat(3, 1fr); grid-auto-rows: 23px; }
.gallery-grid button { display: flex; align-items: center; gap: 5px; padding-left: 2px; border: 1px solid transparent; }
.gallery-grid .chosen { background: #cce4fc; border-color: #7da7cf; padding-left: 0; }
.gallery-scroll { width: 18px; display: grid; border-left: 1px solid #e2e3e4; }
.gallery-scroll button { display: grid; place-items: center; }
.gallery-scroll .dim { color: #b5b5b5; }
.view { width: 217px; }
.view .group-body { padding-left: 10px; gap: 10px; }
.view .big { width: 36px; }
.view .big svg { margin-top: 4px; }
.show { width: 253px; }
.show .group-body { padding-left: 7px; gap: 5px; }
.checks label { gap: 8px; }
.show .big svg { margin-top: 4px; }
.view .big span svg { margin: 0; }
.opts { width: 67px; }
.opts .big { width: 62px; }

.locate { display: flex; height: 46px; padding: 6px 16px 6px 0; }
.history { display: flex; align-items: center; width: 122px; padding-left: 14px; gap: 16px; }
.history button:nth-child(n+3) { margin-right: -3px; }
.address { flex: 1; display: flex; align-items: center; gap: 8px; padding-left: 4px; border: 1px solid #d9d9d9; white-space: pre; }
.address a { padding-left: 3px; }
.drop { margin-left: auto; }
.refresh { width: 35px; height: 100%; border-left: 1px solid #d9d9d9; display: grid; place-items: center; }
.search { width: 393px; margin-left: 14px; display: flex; align-items: center; gap: 15px; padding-left: 17px; border: 1px solid #d9d9d9; }
.search input { flex: 1; min-width: 0; height: 30px; padding: 0; border: 0; outline: 0; font: inherit; background: none; }
.search input::placeholder { color: #6d6d6d; opacity: 1; white-space: pre; }

.content { flex: 1; min-height: 0; display: flex; }
.places { width: 354px; display: flex; padding-top: 3px; border-right: 1px solid #f3f3f3; }
.places ul { flex: 1; margin: 0; padding: 18px 0 0; list-style: none; display: flex; flex-direction: column; gap: 10px; }
.places a { display: flex; align-items: center; gap: 6px; height: 27px; padding-left: 27px; }
.here { background: #d9d9d9; }
.vscroll { width: 17px; margin: 0 3px 0 1px; display: flex; flex-direction: column; }
.vscroll button { height: 18px; display: grid; place-items: center; background: #f0f0f0; }
.vscroll i { flex: 1; background: #cdcdcd; }
.files { flex: 1; min-width: 0; display: flex; flex-direction: column; justify-content: space-between; padding-top: 2px; }
table { width: calc(100% - 19px); margin-left: 19px; border-spacing: 0; table-layout: fixed; white-space: pre; }
.c-date { width: 166px; }
.c-type { width: 138px; }
.c-size { width: 77px; }
th { height: 37px; padding: 1px 8px 0 7px; text-align: left; font-weight: 400; color: #5f6470; border-left: 1px solid #e5e5e5; border-bottom: 6px solid transparent; }
th:first-child { position: relative; padding: 1px 0 0; border-left: 0; }
.head-name { display: flex; align-items: center; gap: 12px; margin-left: -4px; }
.sorted { position: absolute; left: 50%; top: 0; margin-left: -6px; color: #888; }
td { height: 24px; padding: 0 8px; color: #6d6d6d; }
td:first-child { padding: 0; color: #222; }
td:last-child { padding: 0 2px 0 0; text-align: right; }
.name { display: flex; align-items: center; justify-content: flex-start; gap: 5px; padding-left: 24px; }
.picked { background: #cce8ff; outline: 1px solid #b5dcf8; outline-offset: -1px; }
.picked .name { padding-left: 4px; }
.hscroll { display: flex; height: 17px; background: #f0f0f0; }
.hscroll i { flex: 1; background: #cdcdcd; }
.hscroll button { width: 48px; padding-right: 8px; display: flex; align-items: center; justify-content: flex-end; }
.status { height: 30px; display: flex; justify-content: flex-end; align-items: center; gap: 4px; padding-right: 8px; }
.mode { height: 26px; width: 20px; display: grid; place-items: center; }
.mode.on { width: 25px; background: #cce8f7; border: 1px solid #5fa8cc; }

/* Context menu */
.menu {
  position: absolute; left: 397px; top: 436px; width: 602px;
  display: flex; flex-direction: column; padding: 5px 2px 6px;
  background: #eee; border: 1px solid #a0a0a0; border-left-color: #e0e6ea;
  box-shadow: 3px 3px 3px #0009;
}
.menu button { display: flex; align-items: center; height: 25px; padding-right: 11px; color: #1c1c1c; text-align: left; }
.menu i { width: 36px; padding-left: 8px; display: flex; }
.menu hr { height: 1px; margin: 4px 9px; border: 0; background: #8f8f8f; }
.menu .strong { font-weight: 700; }
.menu .hot { background: #fff; }
.sub { margin-left: auto; }
.pointer { position: absolute; left: 519px; top: 968px; }
```
